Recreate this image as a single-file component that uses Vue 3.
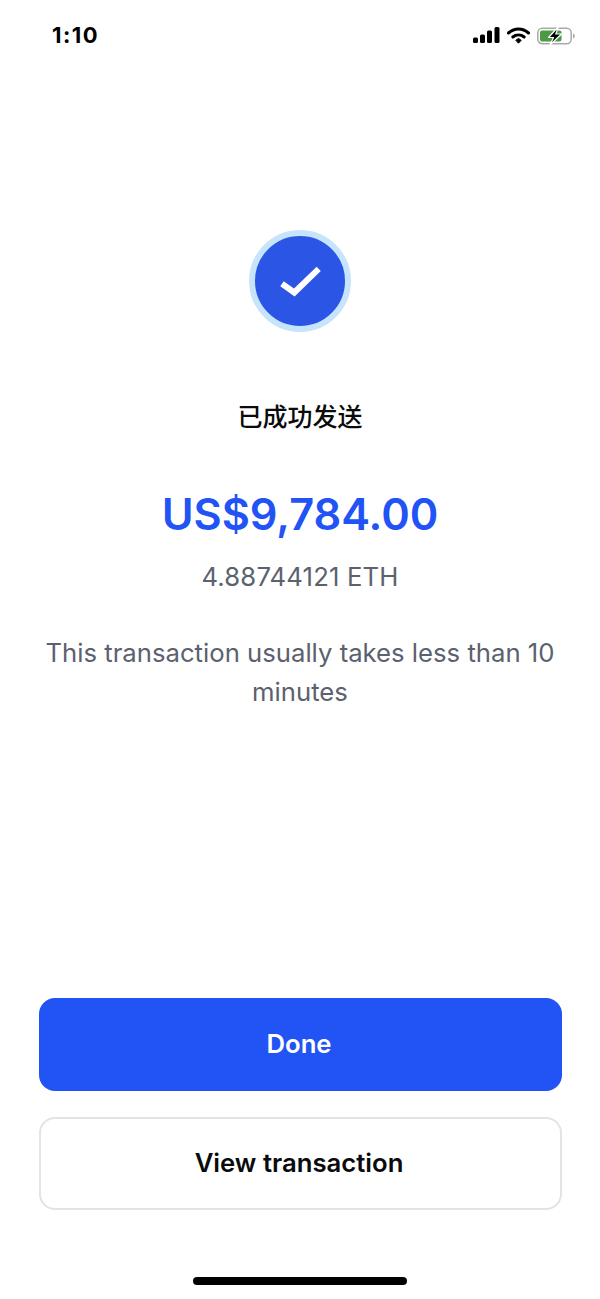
<template>
    <div class="screen">
        <div class="status-bar">
            <span class="time">1:10</span>
            <div class="status-icons">
                <svg width="27" height="16" viewBox="0 0 27 16">
                    <rect x="0" y="10.5" width="5" height="5.5" rx="1.5" fill="#000" />
                    <rect x="7" y="7.5" width="5" height="8.5" rx="1.5" fill="#000" />
                    <rect x="14" y="3.5" width="5" height="12.5" rx="1.5" fill="#000" />
                    <rect x="21.5" y="0" width="5" height="16" rx="1.5" fill="#000" />
                </svg>
                <svg width="23" height="17" viewBox="0 0 23 17">
                    <path d="M1.5 6C7.5 0.8 15.5 0.8 21.5 6" fill="none" stroke="#000" stroke-width="3" stroke-linecap="round" />
                    <path d="M5.8 10C9.2 7.2 13.8 7.2 17.2 10" fill="none" stroke="#000" stroke-width="3" stroke-linecap="round" />
                    <path d="M8.8 13.3L11.5 11.4L14.2 13.3L11.5 16.2Z" fill="#000" stroke="#000" stroke-width="1" stroke-linejoin="round" />
                </svg>
                <svg width="38" height="22" viewBox="0 0 38 22">
                    <rect x="0.8" y="4.3" width="33.4" height="15.4" rx="4.5" fill="none" stroke="#a9a9a9" stroke-width="1.5" />
                    <rect x="3" y="6.5" width="21.5" height="11" rx="2" fill="#4d9a45" />
                    <path d="M36 9.5C37.3 10 37.8 11 37.8 12C37.8 13 37.3 14 36 14.5Z" fill="#a9a9a9" />
                    <path d="M21.5 2.5L11.5 13.5H16.5L13 21L24.5 10H18.8Z" fill="#000" stroke="#fff" stroke-width="1.2" stroke-linejoin="round" />
                </svg>
            </div>
        </div>

        <div class="success">
            <div class="badge">
                <svg width="44" height="36" viewBox="0 0 44 36">
                    <path d="M4 20.8L16.3 29.5L40.7 5.8" fill="none" stroke="#fff" stroke-width="6" />
                </svg>
            </div>
            <h1 class="title">已成功发送</h1>
            <div class="amount">US$9,784.00</div>
            <div class="crypto">4.88744121 ETH</div>
            <p class="note">This transaction usually takes less than 10 minutes</p>
        </div>

        <div class="actions">
            <button class="btn primary">Done</button>
            <button class="btn secondary">View transaction</button>
        </div>

        <div class="home-indicator"></div>
    </div>
</template>

<script setup>
</script>

<style scoped>
.screen {
    width: 600px;
    height: 1299px;
    display: flex;
    flex-direction: column;
    background: #fff;
    font-family: Inter, "Noto Sans CJK SC", sans-serif;
    overflow: hidden;
}

.status-bar {
    height: 70px;
    box-sizing: border-box;
    padding: 21px 25px 0 52px;
    display: flex;
    justify-content: space-between;
    align-items: flex-start;
}

.time {
    font-size: 22px;
    line-height: 28px;
    font-weight: 700;
    letter-spacing: 1.5px;
    color: #000;
}

.status-icons {
    display: flex;
    align-items: center;
    gap: 7px;
    height: 28px;
}

.success {
    flex: 1;
    display: flex;
    flex-direction: column;
    align-items: center;
    padding-top: 160px;
}

.badge {
    width: 90px;
    height: 90px;
    border-radius: 50%;
    background: #2a55e5;
    border: 6px solid #c6e4fb;
    display: flex;
    align-items: center;
    justify-content: center;
}

.title {
    margin: 68px 0 0;
    font-size: 25px;
    line-height: 34px;
    font-weight: 500;
    color: #0a0b0d;
}

.amount {
    margin-top: 52px;
    font-size: 43.3px;
    line-height: 56px;
    font-weight: 600;
    color: #2153f5;
}

.crypto {
    margin-top: 20px;
    font-size: 25.7px;
    line-height: 30px;
    letter-spacing: 0.15px;
    color: #5b616e;
}

.note {
    margin: 41px 0 0;
    padding: 0 40px;
    text-align: center;
    font-size: 25.7px;
    line-height: 39px;
    color: #5b616e;
}

.actions {
    display: flex;
    flex-direction: column;
    gap: 26px;
    padding: 0 38.5px;
}

.btn {
    height: 93px;
    padding: 0 2px 2px 0;
    border-radius: 16px;
    font-family: inherit;
    font-size: 25.7px;
    font-weight: 600;
}

.primary {
    background: #2153f5;
    border: none;
    color: #fff;
}

.secondary {
    background: #fff;
    border: 2px solid #e2e3e6;
    color: #0a0b0d;
}

.home-indicator {
    width: 214px;
    height: 8px;
    border-radius: 4px;
    background: #000;
    margin: 67px auto 14px;
}
</style>
